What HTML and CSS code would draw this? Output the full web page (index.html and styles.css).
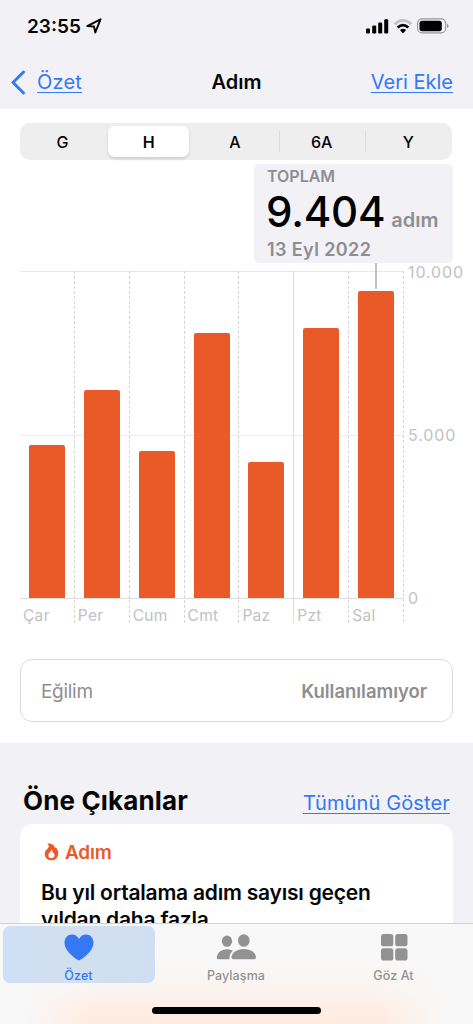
FILE: index.html
```html
<!DOCTYPE html>
<html lang="tr">
<head>
<meta charset="utf-8">
<title>Adım</title>
<link rel="stylesheet" href="styles.css">
</head>
<body>
<div class="screen">
  <header class="header">
    <div class="status">
      <span class="time">23:55</span>
      <svg class="loc" width="16" height="16" viewBox="0 0 16 16"><path d="M1.2 8.1 14.5 1.3 9.3 14.5 8 8.5Z" fill="none" stroke="#000" stroke-width="1.9" stroke-linejoin="round"/></svg>
      <svg class="signal" width="23" height="15" viewBox="0 0 23 15"><rect x="0" y="9.4" width="4" height="5" rx="1.2"/><rect x="6.2" y="6.4" width="4" height="8" rx="1.2"/><rect x="12.2" y="3.5" width="4" height="10.9" rx="1.2"/><rect x="18.2" y="0.3" width="4" height="14.1" rx="1.2"/></svg>
      <svg class="wifi" width="20" height="15" viewBox="0 0 20 15"><path d="M1.5 5.3Q10-2.4 18.5 5.3" fill="none" stroke="#c3c3c6" stroke-width="2.7"/><path d="M4.6 8.6Q10 3.6 15.4 8.6" fill="none" stroke="#000" stroke-width="2.7"/><path d="M6.9 11.1Q10 8.4 13.1 11.1L10 14.4Z"/></svg>
      <svg class="battery" width="32" height="16" viewBox="0 0 32 16"><rect x=".6" y=".9" width="28" height="14" rx="4.4" fill="none" stroke="#98989b" stroke-width="1.1"/><rect x="2.5" y="2.7" width="22.3" height="10.5" rx="2.6"/><path d="M30 5.7Q31.5 6.2 31.5 8T30 10.3Z" fill="#98989b"/></svg>
    </div>
    <nav class="nav">
      <a class="back"><svg width="15" height="25" viewBox="0 0 15 25"><path d="M12.5 2 2 12.5 12.5 23" fill="none" stroke="#3478f6" stroke-width="2.9" stroke-linecap="round" stroke-linejoin="round"/></svg><span class="link back-text">Özet</span></a>
      <h1 class="title">Adım</h1>
      <a class="link add">Veri Ekle</a>
    </nav>
  </header>
  <main>
    <section class="chart-section">
      <div class="segments">
        <span class="segment">G</span><span class="segment selected">H</span><span class="segment">A</span><span class="segment divided">6A</span><span class="segment divided">Y</span>
      </div>
      <div class="callout">
        <div class="callout-label">TOPLAM</div>
        <div class="callout-value"><span class="number">9.404</span><span class="unit">adım</span></div>
        <div class="callout-date">13 Eyl 2022</div>
        <i class="stem"></i>
      </div>
      <div class="chart">
        <div class="plot">
          <div class="day first"><i class="bar" style="height:153px"></i><span>Çar</span></div>
          <div class="day"><i class="bar" style="height:208px"></i><span>Per</span></div>
          <div class="day"><i class="bar" style="height:147px"></i><span>Cum</span></div>
          <div class="day"><i class="bar" style="height:265px"></i><span>Cmt</span></div>
          <div class="day"><i class="bar" style="height:136px"></i><span>Paz</span></div>
          <div class="day week"><i class="bar" style="height:270.5px"></i><span>Pzt</span></div>
          <div class="day"><i class="bar" style="height:307px"></i><span>Sal</span></div>
        </div>
        <div class="scale"><span>10.000</span><span>5.000</span><span>0</span></div>
      </div>
      <div class="trend"><span class="trend-name">Eğilim</span><span class="trend-value">Kullanılamıyor</span></div>
    </section>
    <section class="highlights">
      <div class="section-head"><h2>Öne Çıkanlar</h2><a class="link all">Tümünü Göster</a></div>
      <article class="card">
        <div class="card-kind"><svg width="15" height="18" viewBox="0 0 15 18"><path fill-rule="evenodd" d="M3.2.6C7.6.2 10.6 2.4 11 5.2L11.7 4.3C13.3 6 14.2 8.2 14.2 10.4 14.2 14.5 11.3 17.2 7.4 17.2 3.4 17.2.7 14.6.7 11 .7 8.4 2.2 6.9 3.6 5.7 5.2 4.2 5.1 2.2 3.2.6ZM7.2 6.6C7.5 9 4.4 9.8 4.4 12.4 4.4 14.2 5.7 15.2 7.4 15.2 9.3 15.2 10.5 14 10.5 12.3 10.5 11.2 10.1 10.4 9.6 9.7L8.9 10.6C9 8.8 8.4 7.3 7.2 6.6Z" fill="#ea5a29"/></svg><span>Adım</span></div>
        <p class="card-text">Bu yıl ortalama adım sayısı geçen<br>yıldan daha fazla.</p>
      </article>
    </section>
  </main>
  <footer class="tabs">
    <div class="tab-row">
      <a class="tab active"><svg width="30" height="27" viewBox="0 0 30 27"><path d="M15 26.5C14 26.5.5 18 .5 8.8.5 3.9 3.7.5 8 .5 11.3.5 13.7 2.3 15 5 16.3 2.3 18.7.5 22 .5 26.3.5 29.5 3.9 29.5 8.8 29.5 18 16 26.5 15 26.5Z"/></svg><span>Özet</span></a>
      <a class="tab share"><svg width="40" height="27" viewBox="0 0 40 27"><ellipse cx="11" cy="7.2" rx="5.1" ry="5.6"/><path d="M.8 24C.8 18.8 5.2 15.2 11 15.2 13.2 15.2 15.5 15.8 17 16.7 14.5 18.7 13.2 21.3 13.6 25.3H2.5Q.8 25.3.8 24Z"/><ellipse cx="27.8" cy="6.5" rx="5.8" ry="6.3"/><path d="M15.5 23.6C15.5 18.7 20.8 15 27.8 15S40 18.7 40 23.6Q40 25.3 38.2 25.3H17.3Q15.5 25.3 15.5 23.6Z"/></svg><span>Paylaşma</span></a>
      <a class="tab browse"><svg width="28" height="27" viewBox="0 0 28 27"><rect x="1" y="0" width="12.3" height="12.3" rx="2.6"/><rect x="15.2" y="0" width="12.3" height="12.3" rx="2.6"/><rect x="1" y="14.2" width="12.3" height="12.3" rx="2.6"/><rect x="15.2" y="14.2" width="12.3" height="12.3" rx="2.6"/></svg><span>Göz At</span></a>
    </div>
    <i class="home"></i>
  </footer>
</div>
</body>
</html>
```

FILE: styles.css
```css
* { box-sizing: border-box; }
body { margin: 0; font-family: Inter, "Liberation Sans", sans-serif; color: #050507; }
h1, h2, p { margin: 0; }
svg { flex: none; display: block; }
.screen { width: 473px; height: 1024px; display: flex; flex-direction: column; overflow: hidden; background: #f1f1f6; }
.header { height: 109px; flex: none; }
.status { height: 52px; padding: 0 24px 0 27px; display: flex; align-items: center; }
.time { font-size: 19px; font-weight: 600; }
.loc { margin-left: 5px; }
.signal { margin-left: auto; }
.wifi { margin-left: 4px; }
.battery { margin-left: 4px; }
.nav { height: 60px; display: grid; grid-template-columns: 1fr auto 1fr; align-items: center; padding: 0 20px; }
.link { color: #3478f6; font-size: 20px; line-height: 24px; text-decoration: underline; text-decoration-thickness: 1.3px; text-underline-offset: 3px; text-decoration-skip-ink: none; }
.back { display: flex; align-items: center; gap: 11px; margin-left: -9px; }
.back-text { letter-spacing: .2px; }
.title { font-size: 20px; font-weight: 600; }
.add { justify-self: end; }
main { flex: 1; min-height: 0; overflow: hidden; }
.chart-section { height: 634px; background: #fff; padding: 14px 20px 0; display: flex; flex-direction: column; }
.segments { height: 37px; flex: none; display: grid; grid-template-columns: repeat(5, 1fr); align-items: center; background: #eeeeef; border-radius: 10px; padding: 3px 1px 3px 0; margin-right: 1px; }
.segment { font-size: 16px; font-weight: 500; line-height: 32px; height: 31px; text-align: center; padding-right: 1px; }
.selected { background: #fff; border-radius: 7px; font-weight: 600; margin: 0 3px 0 2px; padding-right: 0; box-shadow: 0 2px 3px #0002; }
.divided { border-left: 1px solid #dcdcde; height: 21px; line-height: 22px; }
.divided:last-child { padding: 0; }
.callout { position: relative; width: 199px; height: 99px; flex: none; margin: 4px 0 0 auto; border-radius: 6px; background: #f1f1f6; padding: 2px 13px; color: #8e8e92; font-weight: 600; }
.callout-label { font-size: 16px; line-height: 21px; }
.callout-value { height: 50px; line-height: 50px; display: flex; align-items: baseline; margin-left: -1px; }
.number { font-size: 42px; font-weight: 500; color: #000; letter-spacing: -.2px; }
.unit { font-size: 20px; margin-left: 6px; }
.callout-date { font-size: 18px; line-height: 26px; letter-spacing: .4px; }
.stem { position: absolute; left: 121px; top: 99px; width: 2px; height: 26px; background: #c3c3c5; }
.chart { height: 351px; flex: none; margin: 8px -20px 0 -1px; display: flex; }
.plot { width: 385px; display: grid; grid-template-columns: repeat(7, 1fr); border-right: 1px dashed #d5d5d5; background: linear-gradient(#e9e9e9, #e9e9e9) 1px 0 / 100% 1px no-repeat, linear-gradient(#ededed, #ededed) 1px 164px / 100% 1px no-repeat, linear-gradient(#dedede, #dedede) 1px 327px / 100% 1px no-repeat; }
.day { border-left: 1px dashed #d5d5d5; height: 352px; display: flex; flex-direction: column; }
.first { border-left-color: transparent; }
.week { border-left: 1px solid #dcdcdc; }
.bar { width: 36px; margin: auto 0 0 9px; background: #ea5a29; border-radius: 2px 2px 0 0; }
.day span { height: 25px; line-height: 35px; padding-left: 3px; font-size: 15.5px; color: #c2c2c4; letter-spacing: .3px; }
.scale { margin: -9px 0 0 4px; display: flex; flex-direction: column; gap: 143px; color: #c2c2c4; font-size: 16px; line-height: 20px; letter-spacing: .9px; }
.trend { height: 63px; flex: none; margin: 37px 0 0; border: 1.5px solid #dadadc; border-radius: 12px; padding: 1px 25px 0 20px; display: flex; align-items: center; justify-content: space-between; color: #8e8e90; font-size: 19px; letter-spacing: -.3px; }
.trend-value { font-weight: 600; font-size: 18.5px; letter-spacing: -.03px; }
.highlights { padding: 0 20px; }
.section-head { height: 81px; padding: 35px 3px 0; display: flex; justify-content: space-between; align-items: center; }
h2 { font-size: 26px; font-weight: 700; line-height: 44px; letter-spacing: .15px; }
.all { padding-top: 3px; letter-spacing: .13px; }
.card { height: 220px; background: #fff; border-radius: 13px; padding: 14px 21px; }
.card-kind { display: flex; align-items: center; gap: 6px; height: 28px; padding-left: 3px; color: #ea5a29; font-size: 19px; font-weight: 600; letter-spacing: -.2px; }
.card-text { padding-top: 13px; font-size: 21px; font-weight: 600; line-height: 27px; letter-spacing: -.22px; }
.tabs { height: 101px; flex: none; border-top: 1px solid #d2d2d4; background: linear-gradient(90deg, #f8f8f8 5%, #f8f8f800 20%, #f8f8f800 80%, #f8f8f8 94%), linear-gradient(#f8f8f8 35%, #faf4f1 65%, #ffece2 88%, #ffebe0); display: flex; flex-direction: column; align-items: center; }
.tab-row { width: 473px; padding: 2px 3px 0; display: grid; grid-template-columns: 152px 162px 1fr; }
.tab { display: flex; flex-direction: column; align-items: center; height: 57px; padding-top: 8px; border-radius: 7px; color: #919193; font-size: 12.5px; font-weight: 500; line-height: 16px; letter-spacing: .1px; }
.tab svg { fill: #929292; }
.tab span { margin-top: 7px; }
.active { color: #3478f6; background: linear-gradient(90deg, #cfdff7, #d2dfee 40%, #cfdff2); padding-right: 1px; }
.active svg { fill: #3478f6; }
.home { width: 169px; height: 7px; border-radius: 4px; background: #000; margin-top: 24px; }
```
